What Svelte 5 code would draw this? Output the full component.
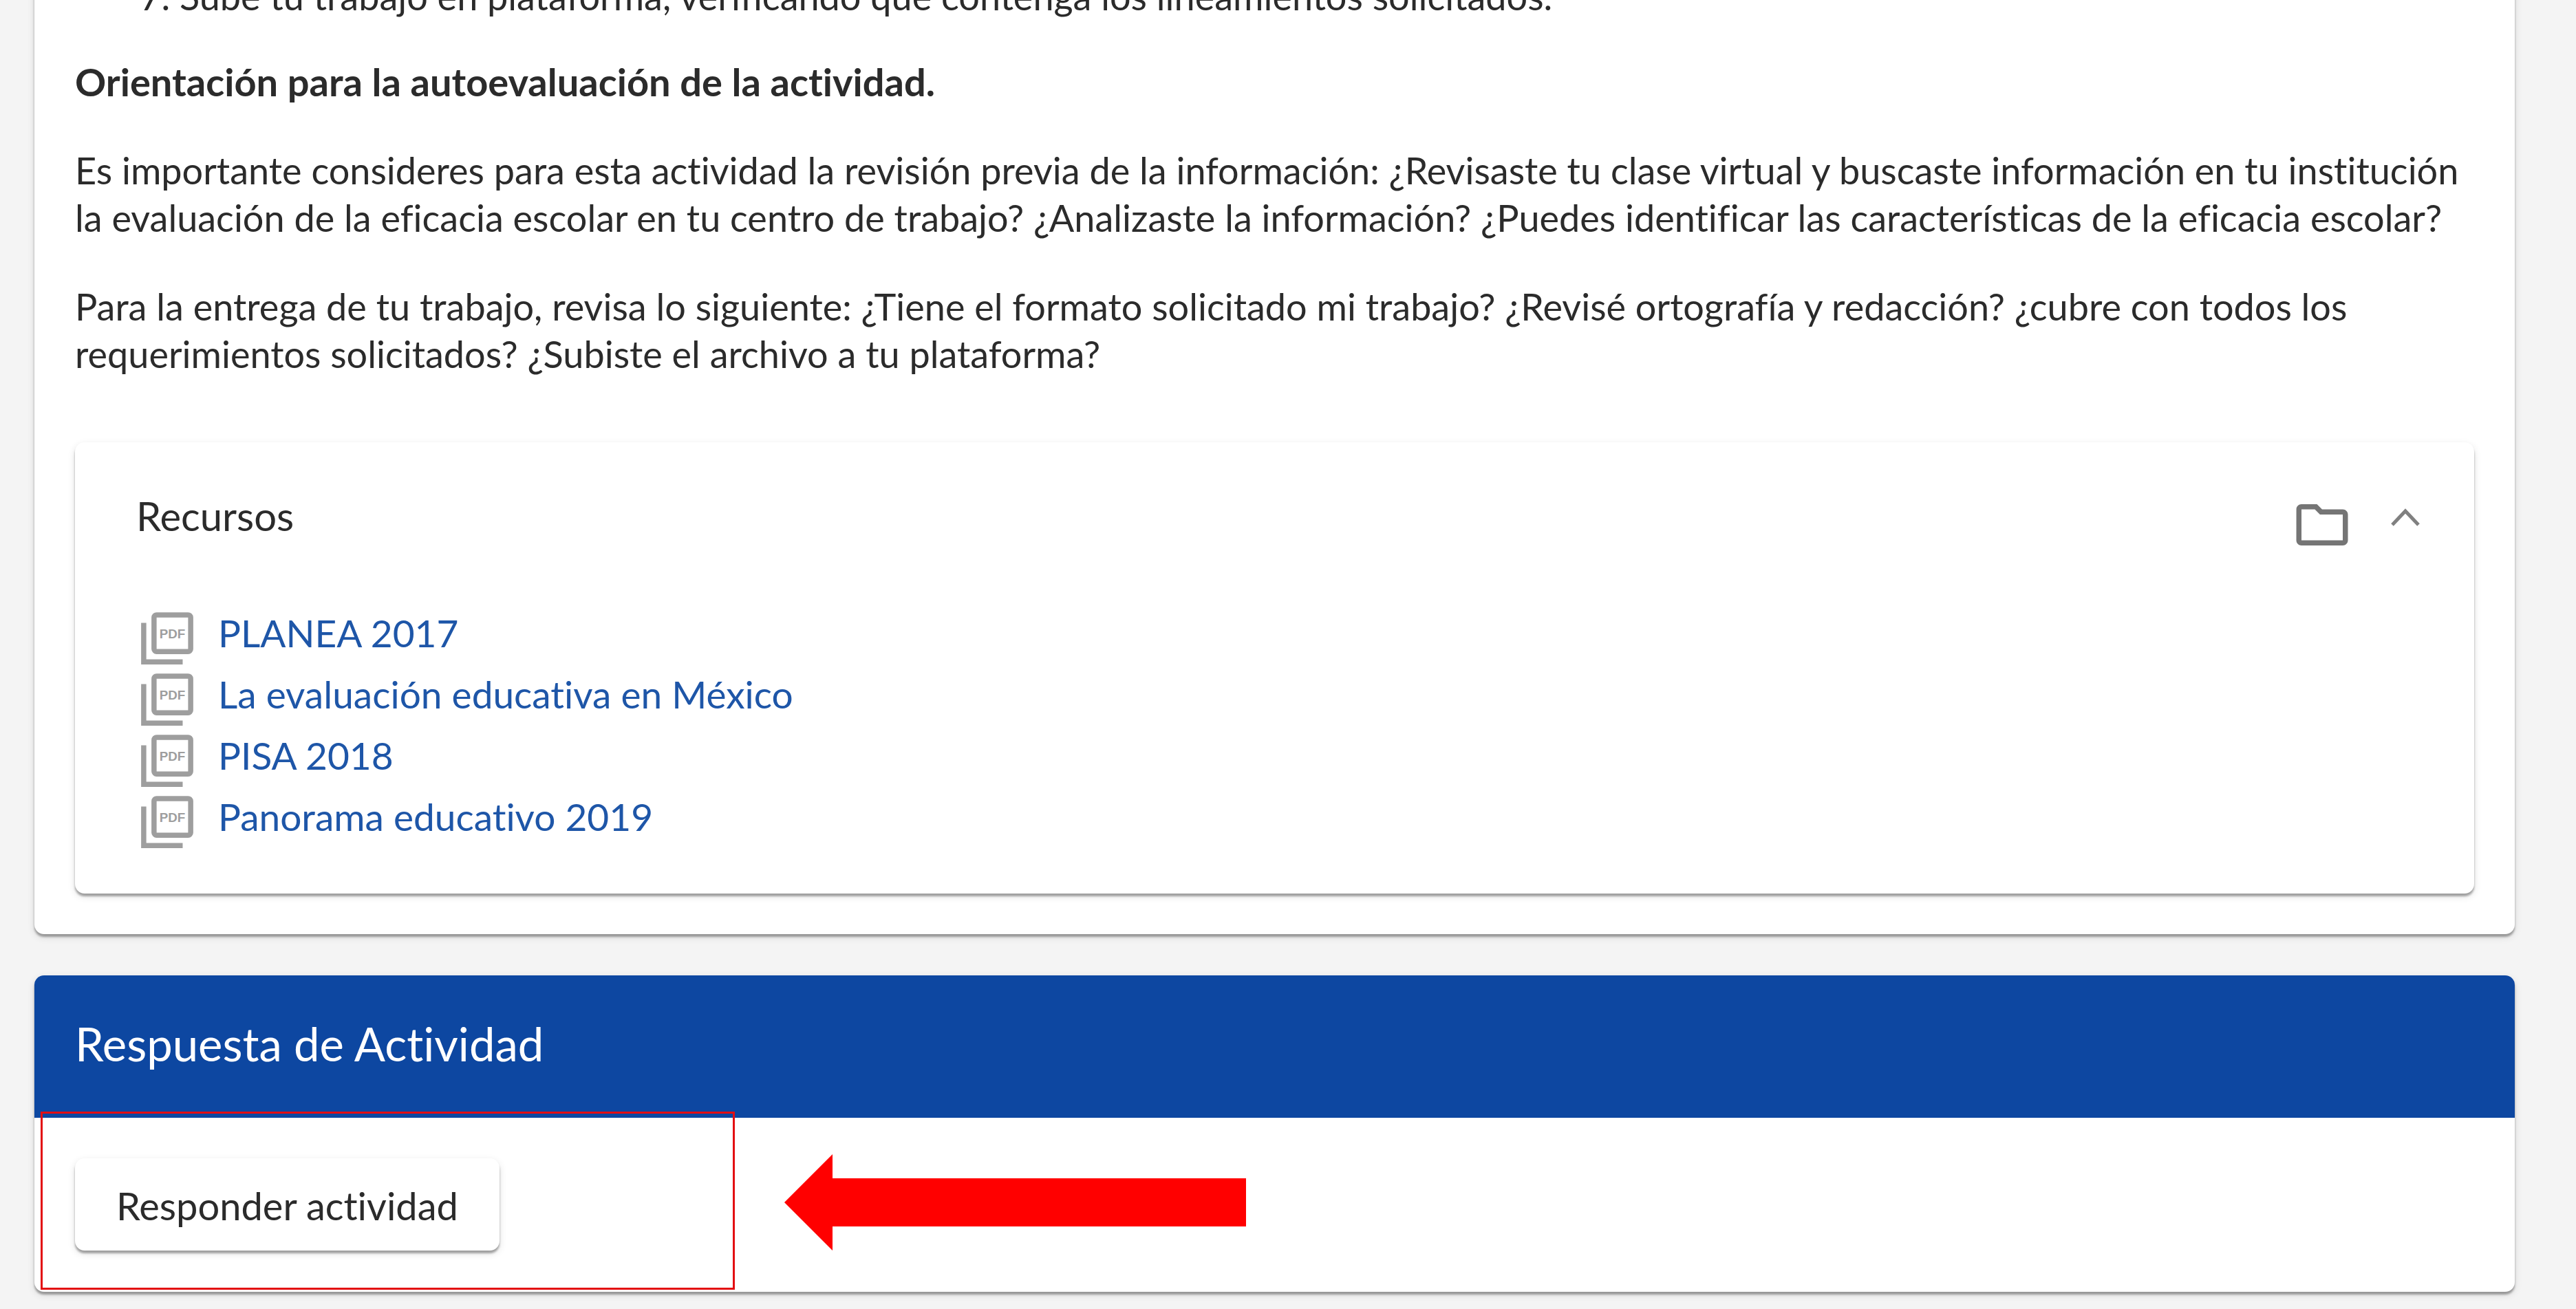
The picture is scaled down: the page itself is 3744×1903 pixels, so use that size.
<script>
  const resources = [
    'PLANEA 2017',
    'La evaluación educativa en México',
    'PISA 2018',
    'Panorama educativo 2019',
  ];
  let open = $state(true);
</script>

<main class="page">
  <section class="card activity">
    <ol class="steps" start="7">
      <li>Sube tu trabajo en plataforma, verificando que contenga los lineamientos solicitados.</li>
    </ol>
    <h2 class="subtitle">Orientación para la autoevaluación de la actividad.</h2>
    <p>
      Es importante consideres para esta actividad la revisión previa de la información: ¿Revisaste tu clase virtual y buscaste información en tu institución<br />
      la evaluación de la eficacia escolar en tu centro de trabajo? ¿Analizaste la información? ¿Puedes identificar las características de la eficacia escolar?
    </p>
    <p>
      Para la entrega de tu trabajo, revisa lo siguiente: ¿Tiene el formato solicitado mi trabajo? ¿Revisé ortografía y redacción? ¿cubre con todos los<br />
      requerimientos solicitados? ¿Subiste el archivo a tu plataforma?
    </p>

    <section class="card resources">
      <button class="toggle" aria-expanded={open} onclick={() => (open = !open)}>
        <span class="toggle-title">Recursos</span>
        <svg class="folder" viewBox="0 0 24 24" aria-hidden="true">
          <path d="M9.17 6l2 2H20v10H4V6h5.17M10 4H4c-1.1 0-1.99.9-1.99 2L2 18c0 1.1.9 2 2 2h16c1.1 0 2-.9 2-2V8c0-1.1-.9-2-2-2h-8l-2-2z" />
        </svg>
        <svg class="chevron" viewBox="0 0 44 28" aria-hidden="true">
          <path d="M3 25L22 5L41 25" />
        </svg>
      </button>
      {#if open}
        <ul class="files">
          {#each resources as name}
            <li>
              <svg class="pdf" viewBox="0 0 24 24" aria-hidden="true">
                <rect x="6.9" y="2.9" width="14.2" height="14.2" rx="1" />
                <path d="M2.9 6v15.1H18" />
                <text x="14" y="12" text-anchor="middle">PDF</text>
              </svg>
              <a href="#recurso">{name}</a>
            </li>
          {/each}
        </ul>
      {/if}
    </section>
  </section>

  <section class="card answer">
    <h2 class="answer-title">Respuesta de Actividad</h2>
    <div class="answer-body">
      <button class="respond">Responder actividad</button>
      <span class="highlight"></span>
      <svg class="arrow" viewBox="0 0 671 140" aria-hidden="true">
        <path d="M0 70L70 0V35H671V105H70V140Z" />
      </svg>
    </div>
  </section>
</main>

<style>
  :global(body) {
    background: #f4f4f4;
    overflow: hidden;
  }
  .page {
    display: flex;
    flex-direction: column;
    gap: 60px;
    padding: 0 89px 24px 50px;
    font-family: Lato, 'Open Sans', sans-serif;
    font-size: 54px;
    font-variant-ligatures: none;
    line-height: 69px;
    color: #2b2b2b;
  }
  .card {
    background: #fff;
    border-radius: 14px;
    box-shadow:
      0 4px 3px rgba(0, 0, 0, 0.32),
      0 4px 12px rgba(0, 0, 0, 0.12);
  }
  .activity {
    margin-top: -40px;
    padding: 0 59px 59px;
  }
  .steps {
    margin: 0 0 55px;
    padding-left: 152px;
  }
  .subtitle {
    margin: 0 0 60px;
    font-size: 56px;
    font-weight: 700;
  }
  p {
    margin: 0 0 60px;
    white-space: nowrap;
  }
  .resources {
    margin-top: 94px;
    padding: 72px 78px 60px 89px;
  }
  .toggle {
    display: flex;
    align-items: flex-start;
    width: 100%;
    padding: 0;
    border: 0;
    background: none;
    font: inherit;
    font-size: 58px;
    color: inherit;
    text-align: left;
    cursor: pointer;
  }
  .toggle-title {
    flex: 1;
  }
  .folder {
    width: 90px;
    height: 90px;
    margin: 3px 54px 0 0;
    fill: #757575;
  }
  .chevron {
    width: 44px;
    height: 28px;
    margin-top: 23px;
    fill: none;
    stroke: #808080;
    stroke-width: 5;
  }
  .files {
    margin: 0;
    padding: 75px 0 0;
    list-style: none;
  }
  .files li {
    display: flex;
    align-items: flex-start;
    gap: 29px;
    height: 89px;
    line-height: 75px;
  }
  .pdf {
    width: 90px;
    height: 90px;
    fill: none;
    stroke: #9e9e9e;
    stroke-width: 2;
  }
  .pdf text {
    fill: #9e9e9e;
    stroke: none;
    font: 700 5px 'Liberation Sans', sans-serif;
  }
  .files a {
    font-size: 55px;
    color: #1e56a8;
    text-decoration: none;
  }
  .answer {
    overflow: hidden;
  }
  .answer-title {
    margin: 0;
    padding: 64px 59px 73px;
    background: #0d47a1;
    color: #fff;
    font-size: 67px;
    font-weight: 400;
    line-height: 70px;
  }
  .answer-body {
    position: relative;
    padding: 59px 59px 60px;
  }
  .respond {
    display: block;
    padding: 34px 60px 31px;
    border: 0;
    border-radius: 14px;
    background: #fff;
    box-shadow:
      0 4px 3px rgba(0, 0, 0, 0.32),
      0 4px 12px rgba(0, 0, 0, 0.12);
    font: inherit;
    font-size: 56px;
    color: inherit;
    cursor: pointer;
  }
  .highlight {
    position: absolute;
    top: -9px;
    left: 9px;
    width: 1009px;
    height: 259px;
    box-sizing: border-box;
    border: 3px solid #e30d12;
    pointer-events: none;
  }
  .arrow {
    position: absolute;
    top: 53px;
    left: 1090px;
    width: 671px;
    height: 140px;
    fill: #f00;
  }
</style>
